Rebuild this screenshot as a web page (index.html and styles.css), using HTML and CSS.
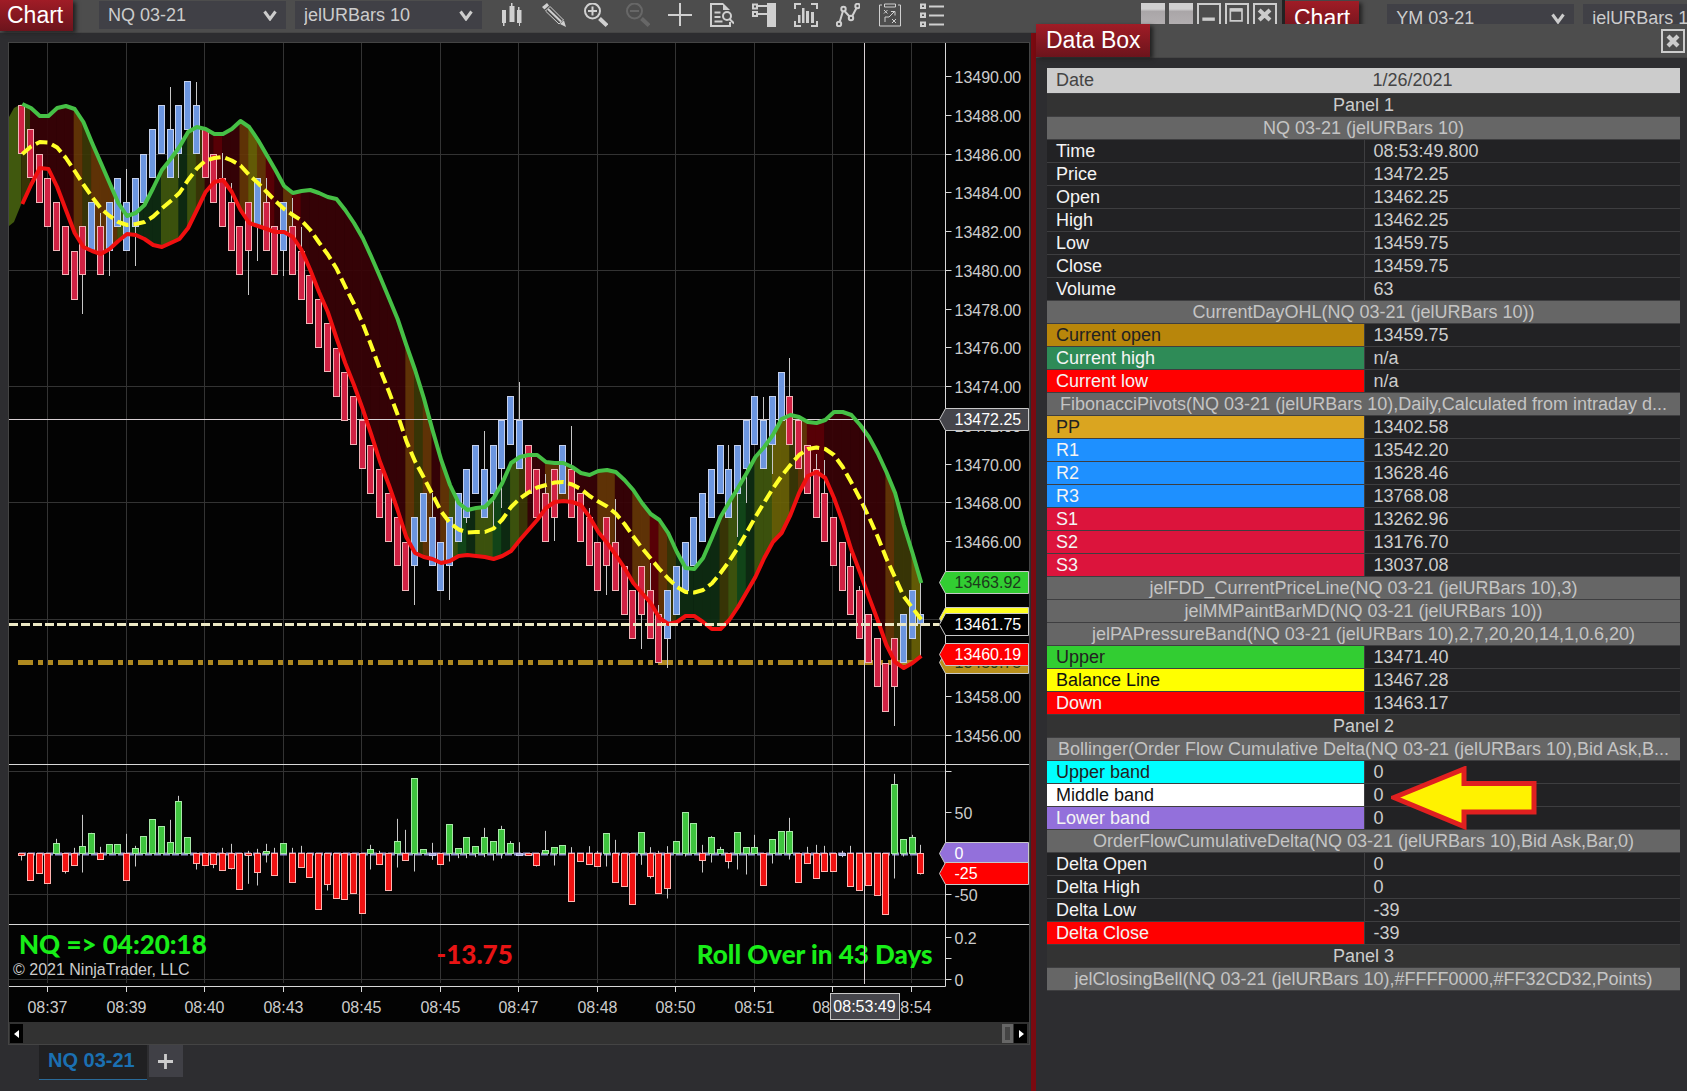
FILE: index.html
```html
<!DOCTYPE html>
<html lang="en">
<head>
<meta charset="utf-8">
<meta name="viewport" content="width=device-width, initial-scale=1">
<title>Chart - NQ 03-21</title>
<link rel="stylesheet" href="styles.css">
</head>
<body>
<main class="desktop">
  <section class="chart-window" aria-label="NQ chart">
    <header class="toolbar">
      <h1 class="title-tag">Chart</h1>
      <label class="picker">
        <select aria-label="Instrument"><option>NQ 03-21</option></select>
        <svg viewBox="0 0 14 11"><path d="M1.500 1.500L7 9L12.500 1.500"/></svg>
      </label>
      <label class="picker">
        <select aria-label="Bar type"><option>jelURBars 10</option></select>
        <svg viewBox="0 0 14 11"><path d="M1.500 1.500L7 9L12.500 1.500"/></svg>
      </label>
      <div class="tools">
        <button aria-label="Chart style"><svg viewBox="0 0 24 24"><path class="f" d="M2 7h4v13h-1.500v3h-1.500v-3h-1zM10 3h1v-3h1.500v3h2v16h-5v-16zM17 7h1v-3h1.500v3h2v13h-1.500v3h-1v-3h-2z"/></svg></button>
        <button aria-label="Drawing tools"><svg viewBox="0 0 24 24"><path class="f" d="M0 4L5 0L7 2.500L2.500 6.500zM18 21L22 17.500L24 24z"/><path class="thin" d="M3.500 8L17 21L21.500 17L8 3.500z"/><path d="M6 6L19 18.500"/></svg></button>
        <button aria-label="Zoom in"><svg viewBox="0 0 24 24"><circle cx="8.500" cy="8" r="7.500"/><path d="M8.500 3.500v9M4 8h9"/><path class="w4" d="M15.500 15.500L23 22.500"/></svg></button>
        <button aria-label="Zoom out" disabled><svg viewBox="0 0 24 24"><circle cx="8.500" cy="8" r="7.500"/><path d="M4 8h9"/><path class="w4" d="M15.500 15.500L23 22.500"/></svg></button>
        <button aria-label="Crosshair"><svg viewBox="0 0 24 24"><path d="M12 0v23M0 12h24"/></svg></button>
        <button aria-label="Data box"><svg viewBox="0 0 24 24"><path d="M20 19v4h-19v-22h12"/><path class="f" d="M13 0l7 7h-7z"/><path d="M4.500 9.500h6M4.500 14h6M4.500 18.500h8"/><circle cx="17" cy="13" r="4"/><path d="M19.500 16L24 20.500"/></svg></button>
        <button aria-label="Chart trader"><svg viewBox="0 0 24 24"><path class="f" d="M15 0h9v24h-9z"/><path d="M1 1.500h4v4h-4zM1 9h4v4h-4zM6 3h9M6 11h9"/></svg></button>
        <button aria-label="Data series"><svg viewBox="0 0 24 24"><path d="M1 6v-5h6M17 1h6v5M1 18v5h6M17 23h6v-5"/><path class="f" d="M4 12h2.500v8h-2.500zM8 5h2.500v15h-2.500zM12 8h3v12h-3zM17 9h3v11h-3z"/></svg></button>
        <button aria-label="Indicators"><svg viewBox="0 0 24 24"><path d="M3.500 19.500L7 8M8.500 8L14 14M16 13.500L20.500 5"/><circle cx="3" cy="21" r="2.200"/><circle cx="7.500" cy="6" r="2.200"/><circle cx="15" cy="15" r="2.200"/><circle cx="21.500" cy="3" r="2.200"/></svg></button>
        <button aria-label="Strategies"><svg viewBox="0 0 24 24"><path class="thin" d="M4 2h-2.500v21h21v-21h-2.500M6.500 1h11v3h-11zM7 19v-5h4l5.500-5.500M13 8.500h4v4M6 7l3.500 3.500M9.500 7l-3.500 3.500M14 16l4 4M18 16l-4 4"/></svg></button>
        <button aria-label="Properties"><svg viewBox="0 0 24 24"><path d="M1 1.500h4v3.500h-4zM1 10.500h4v3.500h-4zM1 19.500h4v3.500h-4zM9 3.500h15M9 12.500h15M9 21.500h15"/></svg></button>
      </div>
    </header>
    <div class="chart-body">
      <svg id="plot" class="plot" role="img" aria-label="NQ price, order flow delta and closing bell panels"></svg>
      <div class="scrollbar">
        <button class="scroll-btn" aria-label="Scroll left"><svg viewBox="0 0 6 10"><path d="M5 1v8L0 5z"/></svg></button>
        <span class="thumb"></span>
        <button class="scroll-btn" aria-label="Scroll right"><svg viewBox="0 0 6 10"><path d="M1 1v8l5-4z"/></svg></button>
      </div>
      <nav class="tabs">
        <a class="tab" href="#plot">NQ 03-21</a>
        <button class="add-tab" aria-label="Add tab"><svg viewBox="0 0 16 16"><path d="M8 0v16M0 8h16"/></svg></button>
      </nav>
    </div>
  </section>

  <section class="side">
    <div class="behind">
      <div class="win-buttons">
        <button class="blank" aria-label="Instrument link"></button>
        <button class="blank" aria-label="Interval link"></button>
        <button class="box" aria-label="Minimize"><svg viewBox="0 0 24 24"><path class="w3" d="M4 17h15"/></svg></button>
        <button class="box" aria-label="Maximize"><svg viewBox="0 0 24 24"><path d="M4 5h14v14h-14z"/><path class="w3" d="M4 6h14"/></svg></button>
        <button class="box" aria-label="Close"><svg viewBox="0 0 24 24"><path class="w4" d="M5 6L18 18M18 6L5 18"/></svg></button>
      </div>
      <div class="second-bar">
        <h2 class="title-tag">Chart</h2>
        <label class="picker">
          <select aria-label="Second instrument"><option>YM 03-21</option></select>
          <svg viewBox="0 0 14 11"><path d="M1.500 1.500L7 9L12.500 1.500"/></svg>
        </label>
        <label class="picker">
          <select aria-label="Second bar type"><option>jelURBars 10</option></select>
        </label>
      </div>
    </div>

    <section class="data-box">
      <header class="data-head">
        <h2 class="title-tag">Data Box</h2>
        <button class="box" aria-label="Close data box"><svg viewBox="0 0 24 24"><path class="w4" d="M6 6L18 18M18 6L6 18"/></svg></button>
      </header>
      <table class="data">
        <colgroup><col class="c-name"><col class="c-value"></colgroup>
        <tbody>
          <tr class="date"><th>Date</th><td>1/26/2021</td></tr>
          <tr class="panel"><th colspan="2">Panel 1</th></tr>
          <tr class="group"><th colspan="2">NQ 03-21 (jelURBars 10)</th></tr>
          <tr><th>Time</th><td>08:53:49.800</td></tr>
          <tr><th>Price</th><td>13472.25</td></tr>
          <tr><th>Open</th><td>13462.25</td></tr>
          <tr><th>High</th><td>13462.25</td></tr>
          <tr><th>Low</th><td>13459.75</td></tr>
          <tr><th>Close</th><td>13459.75</td></tr>
          <tr><th>Volume</th><td>63</td></tr>
          <tr class="group"><th colspan="2">CurrentDayOHL(NQ 03-21 (jelURBars 10))</th></tr>
          <tr class="k-open"><th>Current open</th><td>13459.75</td></tr>
          <tr class="k-high"><th>Current high</th><td>n/a</td></tr>
          <tr class="k-red"><th>Current low</th><td>n/a</td></tr>
          <tr class="group"><th colspan="2">FibonacciPivots(NQ 03-21 (jelURBars 10),Daily,Calculated from intraday d...</th></tr>
          <tr class="k-pp"><th>PP</th><td>13402.58</td></tr>
          <tr class="k-blue"><th>R1</th><td>13542.20</td></tr>
          <tr class="k-blue"><th>R2</th><td>13628.46</td></tr>
          <tr class="k-blue"><th>R3</th><td>13768.08</td></tr>
          <tr class="k-crimson"><th>S1</th><td>13262.96</td></tr>
          <tr class="k-crimson"><th>S2</th><td>13176.70</td></tr>
          <tr class="k-crimson"><th>S3</th><td>13037.08</td></tr>
          <tr class="group"><th colspan="2">jelFDD_CurrentPriceLine(NQ 03-21 (jelURBars 10),3)</th></tr>
          <tr class="group"><th colspan="2">jelMMPaintBarMD(NQ 03-21 (jelURBars 10))</th></tr>
          <tr class="group"><th colspan="2">jelPAPressureBand(NQ 03-21 (jelURBars 10),2,7,20,20,14,1,0.6,20)</th></tr>
          <tr class="k-green"><th>Upper</th><td>13471.40</td></tr>
          <tr class="k-yellow"><th>Balance Line</th><td>13467.28</td></tr>
          <tr class="k-red"><th>Down</th><td>13463.17</td></tr>
          <tr class="panel"><th colspan="2">Panel 2</th></tr>
          <tr class="group"><th colspan="2">Bollinger(Order Flow Cumulative Delta(NQ 03-21 (jelURBars 10),Bid Ask,B...</th></tr>
          <tr class="k-cyan"><th>Upper band</th><td>0</td></tr>
          <tr class="k-white"><th>Middle band</th><td><div class="marked">0<svg class="pointer" viewBox="0 0 147 64"><path d="M3 31.500L73 3v14.500h70v28.500h-70v14.500z"/></svg></div></td></tr>
          <tr class="k-purple"><th>Lower band</th><td>0</td></tr>
          <tr class="group"><th colspan="2">OrderFlowCumulativeDelta(NQ 03-21 (jelURBars 10),Bid Ask,Bar,0)</th></tr>
          <tr><th>Delta Open</th><td>0</td></tr>
          <tr><th>Delta High</th><td>0</td></tr>
          <tr><th>Delta Low</th><td>-39</td></tr>
          <tr class="k-red"><th>Delta Close</th><td>-39</td></tr>
          <tr class="panel"><th colspan="2">Panel 3</th></tr>
          <tr class="group"><th colspan="2">jelClosingBell(NQ 03-21 (jelURBars 10),#FFFF0000,#FF32CD32,Points)</th></tr>
        </tbody>
      </table>
    </section>
  </section>
</main>
<script src="chart.js"></script>
</body>
</html>
```
FILE: styles.css
```css
* { box-sizing: border-box; }

body {
  margin: 0;
  background: #2d2d30;
  color: #ccc;
  font-family: "Liberation Sans", Arial, sans-serif;
  font-size: 18px;
}

button, select {
  margin: 0;
  padding: 0;
  border: 0;
  border-radius: 0;
  background: none;
  color: inherit;
  font: inherit;
}

svg { display: block; }

.desktop {
  display: grid;
  grid-template-columns: minmax(0, 1036fr) minmax(0, 651fr);
  min-height: 100vh;
}

/* Shared window furniture */
.title-tag {
  display: flex;
  align-items: center;
  margin: 0;
  padding: 0 9px 2px 7px;
  background: linear-gradient(#a01c26, #6c141c);
  box-shadow: 3px 2px 4px #222;
  color: #fff;
  font-size: 23px;
  font-weight: 400;
  line-height: 28px;
}

.picker {
  display: grid;
  align-items: center;
  background: #404046;
}
.picker select {
  grid-area: 1 / 1;
  width: 100%;
  height: 100%;
  padding-left: 9px;
  appearance: none;
  outline: 0;
}
.picker svg {
  grid-area: 1 / 1;
  justify-self: end;
  width: 14px;
  height: 11px;
  margin-right: 9px;
  pointer-events: none;
  fill: none;
  stroke: #ccc;
  stroke-width: 3;
}

.box {
  width: 24px;
  height: 24px;
  flex: none;
  border: 2px solid #ccc;
}
.box svg {
  width: 20px;
  height: 20px;
  fill: none;
  stroke: #ccc;
  stroke-width: 2;
}
.box .w3 { stroke-width: 4; }
.box .w4 { stroke-width: 5; }

/* Chart window */
.chart-window {
  display: flex;
  flex-direction: column;
}
.toolbar {
  display: flex;
  height: 33px;
  padding-bottom: 1px;
  background: #4d4d4d;
  border-bottom: 1px solid #454545;
}
.toolbar .title-tag { width: 73px; margin-right: 26px; }
.toolbar .picker {
  width: 187px;
  height: 28px;
  margin: 1px 9px 0 0;
}
.tools {
  display: flex;
  align-items: center;
  gap: 18px;
  margin-left: 9px;
  padding-bottom: 2px;
}
.tools svg {
  width: 24px;
  height: 24px;
  fill: none;
  stroke: #d0d0d0;
  stroke-width: 2;
}
.tools .f { fill: #d0d0d0; stroke: none; }
.tools .w4 { stroke-width: 4; }
.tools .thin { stroke-width: 1; }
.tools button:disabled { opacity: .2; }

.chart-body {
  flex: 1;
  display: flex;
  flex-direction: column;
  padding: 9px 1px 0 8px;
  border-right: 5px solid #7a0a10;
}
.plot {
  width: 100%;
  height: 980px;
  border-top: 1px solid #444;
  border-left: 1px solid #444;
  border-right: 1px solid #444;
  background: #030303;
}
.scrollbar {
  display: flex;
  justify-content: space-between;
  height: 23px;
  padding: 2px 2px 1px 1px;
  border: 1px solid #444;
  border-top: 0;
  background: #323232;
}
.scroll-btn {
  display: grid;
  place-items: center;
  width: 13px;
  background: #000;
}
.scroll-btn svg {
  width: 6px;
  height: 10px;
  fill: #fff;
}
.thumb {
  width: 11px;
  margin: 0 1px 0 auto;
  border: 3px solid #666;
  background: #444;
}
.tabs {
  display: flex;
  gap: 2px;
  padding-left: 31px;
}
.tab {
  padding: 0 12px 3px 9px;
  border-bottom: 1px solid #2a6a98;
  background: #202022;
  color: #1b70b2;
  font-size: 20px;
  font-weight: 700;
  line-height: 31px;
  text-decoration: none;
}
.add-tab {
  display: grid;
  place-items: center;
  width: 34px;
  height: 32px;
  background: #404046;
}
.add-tab svg {
  width: 15px;
  height: 15px;
  stroke: #ccc;
  stroke-width: 3;
}

/* Windows partly hidden by the data box */
.side {
  display: flex;
  flex-direction: column;
}
.behind {
  display: flex;
  justify-content: space-between;
  height: 24px;
  overflow: hidden;
  background: #4d4d4d;
}
.win-buttons {
  display: flex;
  gap: 4px;
  margin-left: auto;
  padding: 3px 5px 0 0;
}
.blank {
  width: 24px;
  height: 24px;
  background: linear-gradient(#d0d0d0 25%, #aaa6a8 35%, #b4b0b2);
}
.second-bar {
  display: flex;
  flex: none;
  width: 405px;
  height: 34px;
  padding-top: 1px;
  overflow: hidden;
  border-left: 3px solid #222;
}
.second-bar .title-tag {
  width: 75px;
  margin-right: 28px;
  padding: 0 9px 0 9px;
}
.second-bar .picker {
  flex: none;
  width: 187px;
  height: 28px;
  margin: 3px 9px 0 0;
}

/* Data box */
.data-box {
  flex: 1;
  background: #2d2d30;
}
.data-head {
  display: flex;
  justify-content: space-between;
  align-items: center;
  height: 34px;
  padding-right: 2px;
  border-bottom: 1px solid #454545;
  background: #4d4d4d;
}
.data-head .title-tag {
  align-self: stretch;
  padding: 0 9px 2px 10px;
}
.data {
  width: calc(100% - 18px);
  margin: 10px 7px 0 11px;
  border-spacing: 0;
  table-layout: fixed;
}
.c-name { width: 50%; }
.data th, .data td {
  height: 23px;
  padding: 0 9px;
  overflow: hidden;
  border-bottom: 1px solid #3e3e40;
  background: #222224;
  font-weight: 400;
  line-height: 20px;
  text-align: left;
  white-space: nowrap;
}
.data th { color: #f4f4f4; }
.data td { border-left: 1px solid #3e3e40; }
.data .date th, .data .date td {
  height: 26px;
  padding-bottom: 2px;
  border-left: 0;
  background: #ccc;
  color: #444;
}
.data .panel th { background: #333; color: #ccc; text-align: center; }
.data .group th { background: #666; color: #c4c4c4; text-align: center; }
.data .k-open th { background: #b8860b; color: #222; }
.data .k-high th { background: #2e8b57; }
.data .k-red th { background: #f00; }
.data .k-pp th { background: #daa520; color: #222; }
.data .k-blue th { background: #1e90ff; }
.data .k-crimson th { background: #dc143c; }
.data .k-green th { background: #32cd32; color: #222; }
.data .k-yellow th { background: #ff0; color: #111; }
.data .k-cyan th { background: #0ff; color: #222; }
.data .k-white th { background: #fff; color: #111; }
.data .k-purple th { background: #9370db; }
.data .k-white td { overflow: visible; }

.marked { position: relative; }
.pointer {
  position: absolute;
  top: -19px;
  left: 17px;
  width: 147px;
  height: 64px;
  fill: #fff200;
  stroke: #e02020;
  stroke-width: 5;
}

/* Plot */
.plot text { font-size: 16px; fill: #ccc; }
.plot .grid { stroke: #333; stroke-width: 1; }
.plot .rule { stroke: #d8d8d8; stroke-width: 1; }
.plot .cross { stroke: #d8d0d4; stroke-width: 1; }
.plot .wick { stroke: #c8c8c8; stroke-width: 1; }
.plot .up { fill: #6c96e0; stroke: #c4d0ec; }
.plot .down { fill: #d02244; stroke: #f2b4b8; }
.plot .buy { fill: #3ec43e; stroke: #a8e8a8; }
.plot .sell { fill: #f01212; stroke: #ffb4b0; }
.plot .flat { fill: #a8a8dc; stroke: #c8c8ec; }
.plot .line { fill: none; stroke-width: 4; stroke-linejoin: round; }
.plot .upper { stroke: #46c046; }
.plot .lower { stroke: #f01010; }
.plot .middle { stroke: #ffff28; stroke-dasharray: 12 5; }
.plot .zero { stroke: #9494cc; stroke-width: 3; stroke-dasharray: 7 2; }
.plot .last { stroke: #ece8c4; stroke-width: 3; stroke-dasharray: 9 3; }
.plot .day-open { stroke: #b08a20; stroke-width: 5; stroke-dasharray: 15 5 5 5 5 5; }
.plot .tag { stroke: #c8c8c8; }
.plot .light { fill: #fff; }
.plot .dark { fill: #1c3a1c; }
.plot .banner {
  font-family: Lato, "Open Sans", sans-serif;
  font-size: 26px;
  font-weight: 900;
  fill: #18ee18;
}
.plot .loss { fill: #e81414; }
```
FILE: chart.js
```js
(function () {
  var svg = document.getElementById('plot');
  var NS = 'http://www.w3.org/2000/svg';
  var TOP = 43, LEFT = 9, HEIGHT = 979;

  // Top step of each bar; one step is 1.25 points and a bar spans two.
  var steps = [0,1,2,3,4,5,6,5,4,5,4,3,4,3,2,1,0,1,0,-1,0,1,2,3,4,5,4,3,4,5,4,5,6,7,8,9,
    10,11,12,13,14,15,16,17,18,17,16,17,18,17,16,15,14,15,14,13,12,13,14,15,16,15,14,15,16,
    17,18,17,18,19,20,19,20,21,20,19,18,17,16,15,14,15,14,13,12,13,12,11,12,13,14,15,16,17,
    18,19,20,21,22,23,22,21,20,21];
  var rising = [8,10,11,12,13,14,15,16,17,18,19,20,27,30,45,46,47,48,49,50,51,52,53,54,55,
    56,57,62,74,75,76,77,78,79,80,81,82,83,84,85,86,87,101,102,103];
  // Wick ends: bar index to far end in plot units.
  var wicks = {7:314,9:213,10:276,12:169,13:266,17:87,18:178,20:82,23:153,24:183,26:295,
    27:261,28:178,30:276,31:198,32:227,45:605,47:493,49:600,51:523,53:431,54:528,55:508,
    57:382,60:474,61:541,63:426,65:508,67:595,68:499,71:649,72:563,73:605,74:668,81:445,
    82:537,83:503,85:397,86:474,88:358,91:454,92:460,95:553,96:586,100:726};
  var upper = [104,108,116,116,108,106,109,122,143,163,183,203,216,213,205,188,170,159,147,
    132,127,129,134,134,129,121,127,140,155,170,186,193,191,190,193,197,199,210,223,238,257,
    277,298,319,345,370,398,430,460,485,503,510,508,507,498,483,463,457,455,455,462,463,463,
    467,473,475,471,470,472,480,490,503,514,520,533,552,568,569,558,538,517,502,488,473,457,
    447,435,419,415,417,422,423,420,412,412,415,425,437,453,472,493,525,553,583];
  var lower = [204,185,168,169,187,210,233,247,251,254,249,241,234,235,239,245,247,243,239,
    228,210,192,182,180,192,210,223,226,229,232,232,237,250,270,292,312,338,363,385,409,435,
    462,485,510,537,553,557,559,563,561,556,555,556,557,559,556,551,540,530,520,508,502,501,
    502,505,517,532,543,555,568,583,593,603,618,624,622,616,616,622,629,629,620,607,592,577,
    558,542,533,515,493,476,472,478,498,522,550,573,597,620,645,662,668,663,656];
  // Pressure shade of each segment.
  var shades = { d: '#380206', r: '#5e0006', b: '#663606', o: '#3c3806', g: '#40580e',
    y: '#6a6206', k: '#0e2c12', e: '#124a1a' };
  var pressure = 'oddddd' + 'bobbbgkkkkgg' + 'kgodrdd' + 'bybrdbr' + 'dddddddddddd' + 'bobdbgekggek' +
    'goddbbbdddbbddbbrbokkkkkogekggyyobrr' + 'ddddddd' + 'booy';
  // Delta bars: [close, high, low] offsets from the zero line in thirds of a unit.
  var delta = [[-5,0,-21],[-80],[-59],[-90],[31,44],[-54,0,-60],[-35,17],[22,116,-57],[59,62],
    [-17,20],[28],[28],[-80,59],[16,23,-39],[52],[103],[82],[34,101],[157,173],[49],[-29,0,-48],
    [-35],[-32,0,-44],[-50,17],[-44,29,-48],[-107],[-7,8,-91],[-56,14,-96],[7,29,-27],[-66,17],
    [31],[-87,17],[-41,23],[-71],[-167],[-92,0,-111],[-134],[-137],[-119],[-179],[11,26,-48],
    [-32,8],[-110],[37,104,-42],[-20,71],[226,226,-54],[13],[0,32,-19],[-32],[88,88,-24],
    [16,16,-14],[49,49,-14],[22,22,-11],[49,77,-11],[37,37,-21],[73,83,-15],[31,37],[0,34],[-4],
    [-35,0,-39],[10,68],[19,19,-36],[25],[-143,19],[-23],[-32,22],[-38,8],[61,61,-39],[-87,41],
    [-98],[-152],[64,64,-34],[-69,19,-75],[-119,8],[-104,22,-135],[37],[124,124,-9],[91],
    [-20,26,-57],[49,52,-27],[13,20],[-23,0,-45],[64,64,-48],[19,19,-63],[19,56],[-95],
    [43,43,-30],[67],[67,107,-18],[-87],[-29,20],[-74,26],[-53,23],[-53],[0,8,-11],[-98,23],
    [-110],[-95],[-125],[-182],[208,239,-75],[43,43,-9],[49,56],[-59,26,-63]];
  var times = ['08:37','08:39','08:40','08:43','08:45','08:45','08:47','08:48','08:50','08:51','08:53','08:54'];

  function add(name, attrs, text) {
    var el = document.createElementNS(NS, name);
    Object.keys(attrs).forEach(function (k) { el.setAttribute(k, attrs[k]); });
    if (text !== undefined) el.textContent = text;
    svg.appendChild(el);
  }
  function line(cls, x1, y1, x2, y2) {
    add('line', { 'class': cls, x1: x1, y1: y1, x2: x2, y2: y2 });
  }
  function label(x, y, text, cls, anchor) {
    add('text', { x: x, y: y, 'class': cls || '', 'text-anchor': anchor || 'start' }, text);
  }
  function tag(axis, y, fill, text, cls) {
    add('path', { 'class': 'tag', fill: fill, d: 'M' + (axis - 6) + ' ' + y + 'L' + axis + ' ' +
      (y - 11) + 'H' + (axis + 83) + 'V' + (y + 11) + 'H' + axis + 'Z' });
    if (text) label(axis + 9, y + 5, text, cls);
  }

  function draw() {
    svg.textContent = '';
    var width = svg.clientWidth;
    svg.setAttribute('viewBox', LEFT + ' ' + TOP + ' ' + width + ' ' + HEIGHT);
    var axis = Math.round(LEFT + width - 84) + 0.5;
    var right = LEFT + width;
    var pitch = (axis - LEFT) / 107.3;
    function x(i) { return LEFT + 12.3 + pitch * i; }
    function snap(v) { return Math.round(v) + 0.5; }
    function price(p) { return 76.6 + (13490 - p) * 19.38; }
    var i, p;

    for (i = 0; i < 12; i++) line('grid', snap(x(3 + 9 * i) - 0.5), TOP, snap(x(3 + 9 * i) - 0.5), 983);
    for (p = 13486; p >= 13456; p -= 6) line('grid', LEFT, snap(price(p) - 0.5), axis, snap(price(p) - 0.5));
    [771.5, 894.5, 979.5].forEach(function (y) { line('grid', LEFT, y, axis, y); });

    add('path', { fill: shades.g, d: 'M9 117L14 108L' + x(0) + ' 104V204L14 222L9 226Z' });
    for (i = 0; i < 103; i++) {
      add('path', { fill: shades[pressure[i]] || shades.d, 'fill-opacity': 0.92,
        d: 'M' + x(i) + ' ' + upper[i] + 'L' + (x(i + 1) + 0.4) + ' ' + upper[i + 1] +
          'V' + lower[i + 1] + 'L' + x(i) + ' ' + lower[i] + 'Z' });
    }

    line('cross', LEFT, 419.5, axis - 6, 419.5);
    line('day-open', 18, 662.5, x(102.7), 662.5);

    steps.forEach(function (s, n) {
      var cx = Math.round(x(n)) + 0.5, y = Math.round(105.2 + 24.24 * s) + 0.5;
      var h = n === 103 ? 9 : 48;
      if (n === 103) line('wick', cx, 582, cx, 657);
      else if (wicks[n]) line('wick', cx, wicks[n], cx, wicks[n] < y ? y : y + h);
      add('rect', { 'class': rising.indexOf(n) >= 0 ? 'up' : 'down', x: cx - 3, y: y, width: 6, height: h });
    });

    function path(values) {
      return 'M' + values.map(function (v, n) { return (x(n) + 1).toFixed(1) + ' ' + v; }).join('L');
    }
    add('path', { 'class': 'line middle', d: path(upper.map(function (u, n) { return (u + lower[n]) / 2; })) });
    add('path', { 'class': 'line upper', d: path(upper) });
    add('path', { 'class': 'line lower', d: path(lower) });
    line('last', LEFT, 624.5, axis - 6, 624.5);

    line('zero', 19, 854, x(103), 854);
    delta.forEach(function (d, n) {
      var cx = Math.round(x(n)) + 0.5, zero = 853.5;
      var hi = d[1] || 0, lo = d[2] || 0;
      if (hi || lo) line('wick', cx, zero - hi / 3, cx, zero - lo / 3);
      var size = Math.max(2, Math.round(Math.abs(d[0]) / 3));
      add('rect', { 'class': d[0] > 0 ? 'buy' : d[0] < 0 ? 'sell' : 'flat', x: cx - 3,
        y: d[0] > 0 ? zero - size : zero, width: 6, height: size });
    });

    line('rule', LEFT, 764.5, right, 764.5);
    line('rule', LEFT, 924.5, right, 924.5);
    line('rule', LEFT, 986.5, axis, 986.5);
    line('rule', axis, TOP, axis, 986.5);

    for (p = 13490; p >= 13456; p -= 2) {
      var py = snap(price(p) - 0.5);
      line('rule', axis, py, axis + 6, py);
      if (p !== 13462 && p !== 13460 && p !== 13464) label(axis + 9, py + 6, p.toFixed(2));
    }
    [[771.5, ''], [812.5, '50'], [894.5, '-50'], [937.5, '0.2'], [958.5, ''], [979.5, '0']].forEach(function (t) {
      line('rule', axis, t[0], axis + 6, t[0]);
      label(axis + 9, t[0] + 6, t[1]);
    });
    times.forEach(function (t, n) {
      var tx = snap(x(3 + 9 * n) - 0.5);
      line('rule', tx, 986, tx, 992);
      label(tx, 1013, t, '', 'middle');
    });

    tag(axis, 419.5, '#45454b', '13472.25', 'light');
    tag(axis, 582.5, '#32cd32', '13463.92', 'dark');
    tag(axis, 618.5, '#ffff20');
    tag(axis, 624.5, '#000', '13461.75', 'light');
    tag(axis, 662.5, '#b8901c', '13459.75', 'dark');
    tag(axis, 654.5, '#f00', '13460.19', 'light');
    tag(axis, 853.5, '#9370db', '0', 'light');
    tag(axis, 873.5, '#f00', '-25', 'light');

    label(19, 954, 'NQ => 04:20:18', 'banner');
    label(13, 975, '© 2021 NinjaTrader, LLC');
    label(x(52) - 0.5, 964, '-13.75', 'banner loss', 'middle');
    label(axis - 13, 964, 'Roll Over in 43 Days', 'banner', 'end');

    var cross = axis - 81;
    line('cross', cross, TOP, cross, 984);
    add('rect', { x: cross - 34, y: 993.5, width: 69, height: 26, fill: '#45454b', stroke: '#c8c8c8' });
    label(cross, 1012, '08:53:49', 'light', 'middle');
  }

  draw();
  window.addEventListener('resize', draw);
})();
```
